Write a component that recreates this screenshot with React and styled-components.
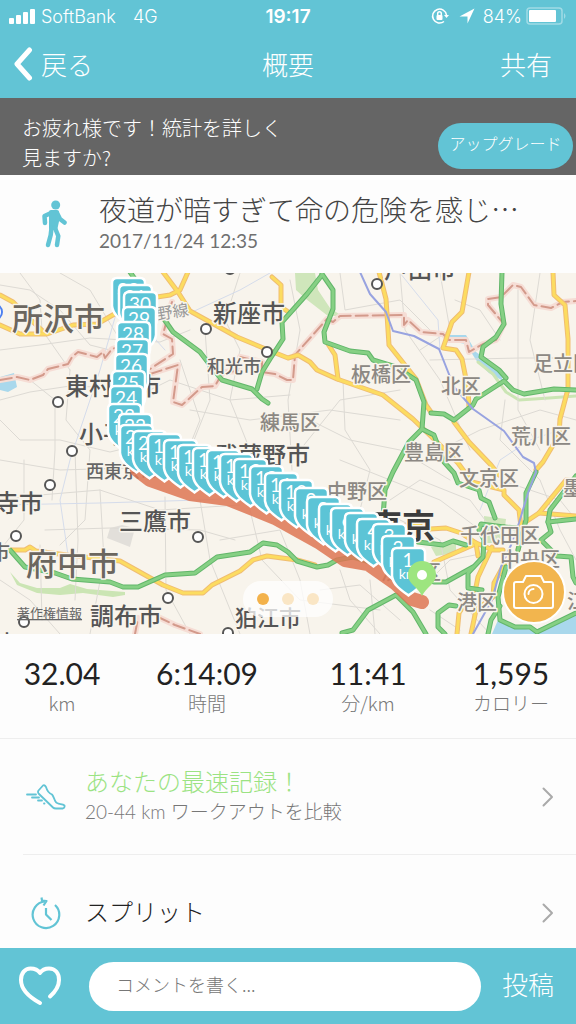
import React from 'react'
import styled, { createGlobalStyle } from 'styled-components'

const teal = '#62c4d5'
const cjk = '"Noto Sans CJK JP", sans-serif'

const GlobalStyle = createGlobalStyle`
  * { box-sizing: border-box; }
  body { margin: 0; background: #fdfdfd; }
  button, input { font: inherit; color: inherit; border: 0; padding: 0; background: none; }
  button { cursor: pointer; }
`
const Screen = styled.div`
  display: flex;
  flex-direction: column;
  height: 100vh;
  font-family: Lato, ${cjk};
  color: #222;
`
const Header = styled.header`
  flex: none;
  height: 98px;
  background: ${teal};
  color: #fff;
`
const StatusBar = styled.div`
  display: grid;
  grid-template-columns: 1fr auto 1fr;
  align-items: center;
  height: 32px;
  padding: 0 9px;
  font-family: Inter, sans-serif;
  font-size: 18px;
  font-weight: 300;
`
const StatusGroup = styled.div`
  display: flex;
  align-items: center;
  justify-content: ${p => (p.$end ? 'flex-end' : 'flex-start')};
  gap: ${p => (p.$end ? '4px' : '6px')};
  white-space: nowrap;
`
const Network = styled.span`
  margin-left: 11px;
`
const Clock = styled.span`
  font-size: 19px;
  font-weight: 600;
`
const NavBar = styled.nav`
  display: grid;
  grid-template-columns: 1fr auto 1fr;
  align-items: center;
  height: 62px;
  padding: 0 13px;
  font-family: ${cjk};
  font-size: 26px;
  font-weight: 300;
`
const Back = styled.button`
  display: flex;
  align-items: center;
  gap: 8px;
  justify-self: start;
`
const Title = styled.h1`
  margin: 0;
  font-size: 26px;
  font-weight: 300;
`
const Share = styled.button`
  justify-self: end;
  margin-right: 11px;
`
const Content = styled.main`
  flex: 1;
  min-height: 0;
  overflow-y: auto;
  scrollbar-width: none;
`
const Promo = styled.section`
  display: flex;
  justify-content: space-between;
  align-items: flex-start;
  height: 77px;
  padding: 15px 3px 0 22px;
  background: #656565;
  color: #fff;
  font-family: ${cjk};
  font-weight: 300;
`
const PromoText = styled.p`
  width: 270px;
  margin: 0;
  font-size: 20px;
  line-height: 30px;
`
const Upgrade = styled.button`
  width: 135px;
  height: 46px;
  margin-top: 10px;
  padding-bottom: 6px;
  border-radius: 23px;
  background: ${teal};
  font-size: 16px;
  white-space: nowrap;
`
const Activity = styled.section`
  display: flex;
  align-items: center;
  gap: 32px;
  height: 98px;
  padding: 0 20px 0 41px;
`
const ActivityName = styled.h2`
  margin: 0;
  font-family: ${cjk};
  font-size: 28px;
  font-weight: 300;
  line-height: 34px;
  color: #444;
`
const ActivityDate = styled.div`
  font-size: 19px;
  line-height: 30px;
  color: #707070;
`
const MapBox = styled.section`
  position: relative;
  height: 361px;
  overflow: hidden;
  background: #f8f4ec;
`
const MapSvg = styled.svg`
  display: block;
  width: 100%;
  height: 100%;
  font-family: ${cjk};
`
const Pager = styled.div`
  position: absolute;
  left: 50%;
  bottom: 17px;
  transform: translateX(-50%);
  display: flex;
  align-items: center;
  justify-content: center;
  gap: 13px;
  width: 90px;
  height: 36px;
  border-radius: 18px;
  background: rgba(255, 255, 255, 0.75);
`
const Dot = styled.button`
  width: 12px;
  height: 12px;
  border-radius: 50%;
  background: ${p => (p.$on ? '#f3b24b' : '#fae6c5')};
`
const Camera = styled.button`
  position: absolute;
  right: 10px;
  bottom: 10px;
  display: flex;
  align-items: center;
  justify-content: center;
  width: 64px;
  height: 64px;
  border: 2px solid #fff;
  border-radius: 50%;
  background: #f2b54e;
`
const Stats = styled.dl`
  display: grid;
  grid-template-columns: 124fr 166fr 156fr 130fr;
  height: 105px;
  margin: 0;
  padding-top: 22px;
  border-bottom: 1px solid #eee;
  text-align: center;
`
const Stat = styled.div`
  display: flex;
  flex-direction: column-reverse;
  justify-content: flex-end;
`
const Value = styled.dd`
  margin: 0;
  font-size: 30px;
  font-weight: 400;
  line-height: 34px;
`
const Unit = styled.dt`
  font-family: ${cjk};
  font-size: 19px;
  font-weight: 300;
  line-height: 26px;
  color: #777;
`
const Row = styled.button`
  display: flex;
  align-items: center;
  width: 100%;
  height: 116px;
  padding: 0 22px 0 23px;
  text-align: left;
`
const Divider = styled.hr`
  height: 1px;
  margin: -1px 0 0 23px;
  border: 0;
  background: #eee;
`
const RowIcon = styled.span`
  display: flex;
  justify-content: center;
  flex: none;
  width: 46px;
  margin-right: 16px;
`
const RowText = styled.span`
  flex: 1;
  display: flex;
  flex-direction: column;
  padding-bottom: 5px;
  font-family: ${cjk};
  font-weight: 300;
`
const RowTitle = styled.span`
  font-size: 24px;
  line-height: 34px;
  color: ${p => (p.$best ? '#9be383' : '#222')};
`
const RowSub = styled.span`
  font-family: Lato, ${cjk};
  font-size: 19px;
  line-height: 28px;
  color: #777;
`
const CommentBar = styled.form`
  flex: none;
  display: flex;
  align-items: center;
  height: 76px;
  padding: 0 22px 0 18px;
  background: ${teal};
  color: #fff;
  font-family: ${cjk};
  font-weight: 300;
`
const Like = styled.button`
  display: flex;
`
const CommentInput = styled.input`
  flex: 1;
  min-width: 0;
  height: 49px;
  margin: 0 21px 0 27px;
  padding: 0 27px 5px;
  border-radius: 25px;
  background: #fff;
  color: #333;
  font-size: 18px;
  &::placeholder { color: #777; opacity: 1; }
`
const Post = styled.button`
  padding-bottom: 5px;
  font-size: 26px;
`

// map geometry
const minor = [
  '0,285 30,290 60,310 90,345 110,350', '20,273 40,300 42,330 70,370', '60,273 90,290 120,340 118,380', '0,350 40,345 90,338 160,342 190,330',
  '0,400 30,392 70,386 120,388', '0,420 20,440 60,440 110,452 160,440', '30,380 55,400 55,450 52,500', '70,370 66,420 90,450 85,520 60,545',
  '0,460 60,470 130,468', '0,500 40,495 100,490 160,510 240,505', '75,450 78,540 75,600', '24,460 24,520 0,550', '45,530 110,528 200,530 235,540',
  '40,545 42,620', '0,580 30,600 60,634', '100,490 104,560 90,634', '165,497 166,590 190,634', '140,440 130,400 170,380 230,400 290,395',
  '205,330 210,400 190,450', '240,273 225,320 240,350 230,400 250,450', '290,280 300,330 288,400 292,470', '190,410 250,420 330,410 400,420',
  '180,360 200,420 180,470', '200,500 210,560 240,634', '220,540 280,530 300,580 310,634', '250,510 262,560 300,600 380,610',
  '340,273 345,310 400,300 430,330', '300,450 340,400 400,390', '343,380 345,430 370,470 360,510', '310,420 350,440 400,450 450,480',
  '400,273 405,330 440,380 470,450', '420,350 450,330 440,273', '430,360 520,358 576,358', '518,290 518,410 540,450', '455,300 480,310 500,340',
  '540,273 530,340 545,400', '505,400 500,440 540,480', '576,420 540,410 480,430 440,450', '340,460 390,480 440,500 480,530', '390,500 420,480 470,500 500,540',
  '400,520 440,540 450,590 490,634', '340,570 350,600 380,634', '420,590 450,560 500,550', '430,610 460,630', '540,480 560,530 576,560', '500,480 560,500 576,520',
  '370,580 375,634', '320,590 360,585 400,620',
]
const pale = ['165,350 120,300 100,370 70,460 60,500 68,555', '190,313 240,290 270,273', '400,273 438,320 440,350', '0,505 100,503 200,500 290,496', '480,510 500,460 530,440 560,430']
const yellow = [
  '0,295 13,302 33,322 45,333', '0,325 20,334 47,334 73,325 97,324 118,312', '157,297 170,295 180,290 188,272',
  '163,272 178,292 190,311 210,322 237,337 273,352 288,358 298,355 310,362 317,370 337,379 383,395 413,419 440,445 458,463 472,482 504,490 504,495 519,510 521,527 518,550',
  '272,277 281,285 281,307 287,311', '328,344 335,355 338,379', '379,272 386,299 389,345 416,379 426,405 431,412',
  '469,272 462,312 452,322 443,348 456,350 462,359 468,389 469,407', '553,272 554,295 565,305 568,339 568,389 560,419 559,435 543,462 536,470',
  '454,422 469,442 491,465 499,475', '10,550 25,550 30,547 36,551 67,555 120,561 163,585 183,593 203,593 212,585 240,571 253,560 267,556 297,560 315,565',
  '430,529 446,528 461,533 476,543 493,550 503,550', '434,562 473,545', '524,523 539,513 566,480 576,481', '539,513 576,516',
  '492,547 478,577 476,587 459,613 457,634', '505,563 494,583 493,597 476,610 471,634', '476,543 478,556', '420,525 390,527',
]
const green = [
  '130,272 137,282 157,309 173,332 200,352 210,365 222,380 252,389 262,399 268,403', '322,275 307,294 282,322 283,339 270,359 262,372 257,389',
  '322,274 333,290 333,309 324,332 325,342 350,351 368,353 373,360 396,367 416,380 424,402 422,429 409,442 393,472 385,490 383,517',
  '422,429 434,435 444,462 454,473 458,483 479,490 481,498 489,502 495,518', '502,272 501,304 504,324 496,337 483,347 481,357 499,370 506,378',
  '431,413 444,414 454,420 473,405 476,399 504,381 513,390 524,394 554,389 576,390',
  '10,550 25,567 55,573 72,579 110,582 123,587 138,587 165,575 195,573 217,557 250,552 263,543 277,545 288,552 297,561 317,567 328,565 337,560 353,557 370,562',
  '342,633 353,630 368,610 396,595 413,612 426,634', '418,542 443,545 453,541 466,545', '434,582 446,582 473,567',
  '504,527 481,524 479,530 484,540 483,557 468,573 468,588 482,590', '504,527 518,528', '456,606 449,605 438,613 438,627 445,634',
  '536,472 526,493 526,520 518,550', '576,476 550,510 548,522 576,519', '548,522 551,532 541,540 557,556 571,557 573,577 576,583',
  '506,567 498,597 500,620 515,627 530,627 537,632 576,613', '488,634 491,620 500,606',
]
const border = [
  '0,380 17,377 30,380 43,375 48,369 68,364 72,357 78,352 97,357 103,352 105,358 112,349 125,345', '172,302 163,334 172,339 173,354 150,369',
  '150,374 178,365 173,402 182,405 202,387 215,386 223,372 240,371', '240,357 262,362 262,372 275,374 287,380 293,380 295,355 327,319 333,322 340,316 404,315 404,325 408,320 421,332 443,334 449,340 466,340 469,352 483,344 496,340 504,324 488,305 488,299 501,297 513,285 521,287 534,305 551,308 563,302 576,301',
  '135,634 138,618', '158,617 175,625 200,634',
]
const train = ['360,272 370,294 386,312 393,331 414,336 439,349 454,387 473,409 504,431 523,457 534,463 536,472 528,493 519,523 511,545 501,567 492,600 473,634']
const stations = [[58, 402], [72, 451], [50, 485], [16, 536], [206, 329], [267, 352], [377, 284], [198, 537], [168, 598], [24, 622], [228, 633], [230, 269]]

const labels = [
  ['所沢市', 12, 330, 31, '#6b665f'], ['東村山市', 65, 395, 24, '#555'], ['小平市', 79, 443, 24, '#555'], ['新座市', 213, 322, 24, '#555'],
  ['和光市', 207, 373, 18, '#666'], ['板橋区', 351, 382, 20, '#8c8883'], ['練馬区', 260, 430, 20, '#8c8883'], ['北区', 441, 394, 20, '#8c8883'],
  ['戸田市', 384, 278, 24, '#555'], ['足立区', 533, 371, 20, '#8c8883'], ['荒川区', 511, 444, 20, '#8c8883'], ['豊島区', 404, 460, 20, '#8c8883'],
  ['文京区', 459, 486, 20, '#8c8883'], ['武蔵野市', 214, 464, 24, '#555'], ['中野区', 327, 499, 20, '#8c8883'], ['東京', 369, 538, 33, '#3c3c3c'],
  ['千代田区', 460, 543, 20, '#8c8883'], ['中央区', 500, 567, 20, '#8c8883'], ['港区', 457, 610, 20, '#8c8883'], ['墨田区', 563, 496, 20, '#8c8883'],
  ['江東区', 567, 609, 20, '#8c8883'], ['渋谷区', 381, 580, 20, '#8c8883'], ['西東京市', 86, 478, 18, '#666'], ['三鷹市', 119, 530, 24, '#555'],
  ['府中市', 26, 575, 31, '#6b665f'], ['国分寺市', -53, 512, 24, '#555'], ['立川市', -50, 560, 20, '#666'], ['調布市', 90, 625, 24, '#555'], ['狛江市', 235, 626, 22, '#555'],
  ['多摩市', -48, 651, 22, '#555'],
]

// [left, top] of every kilometre marker, the first kilometre first
const pins = [
  [391, 547], [381, 535], [372, 523], [356, 518], [344, 512], [330, 507], [318, 503], [306, 496], [294, 487], [279, 479], [264, 472],
  [249, 465], [233, 458], [219, 453], [206, 449], [192, 447], [177, 444], [163, 439], [147, 433], [132, 430], [119, 424], [118, 413],
  [107, 403], [109, 385], [111, 370], [114, 353], [115, 338], [116, 321], [122, 306], [123, 291], [118, 284], [111, 277],
]

const Lines = ({ list, ...rest }) => (
  <g fill='none' strokeLinejoin='round' strokeLinecap='round' {...rest}>
    {list.map(points => <polyline key={points} points={points} />)}
  </g>
)

const Pin = ({ km, x, y }) => (
  <g transform={`translate(${x} ${y})`}>
    <path d='M6 1H29Q34 1 34 6V29C33 38 25 43 17.500 48.500C10 43 2 38 1 29V6Q1 1 6 1Z' fill='#5cc4d6' stroke='#fff' strokeWidth='2.500' />
    <g fill='#fff' textAnchor='middle' fontFamily='Lato, sans-serif'>
      <text x='17' y='20' fontSize='19'>{km}</text>
      <text x='17' y='32' fontSize='14'>km</text>
    </g>
  </g>
)

const RouteMap = () => (
  <MapSvg viewBox='0 273 576 361' preserveAspectRatio='xMidYMid slice' role='img' aria-label='ルート'>
    <path d='M295 273H315L318 290 330 308 342 316 328 316 306 299 296 290ZM484 516 506 519 503 543 485 543ZM431 547 456 543 456 553 436 556Z' fill='#cfe6bb' />
    <path d='M10 572 20 583 37 588 60 588 70 584 87 589 125 592 125 595 113 597 83 593 60 595 37 593 17 585Z' fill='#cbe5b4' />
    <path d='M110 528 122 525 135 528 130 547 107 538Z' fill='#e2dfda' />
    <path d='M449 335 466 335 476 352 499 368 503 381 489 373 476 360 466 344 449 341ZM0 377 14 373 17 387 8 392 0 390ZM492 634 498 620 515 628 535 630 576 614V634Z' fill='#a9d8ec' />
    <Lines list={['478,362 493,374 506,392 519,400 549,398 576,396']} stroke='#cbe5b4' strokeWidth='3' />
    <Lines list={minor} stroke='#dddad4' strokeWidth='1' />
    <Lines list={pale} stroke='#d5dceb' strokeWidth='1' />
    <Lines list={border} stroke='#f6ddd5' strokeWidth='6' />
    <Lines list={border} stroke='#d39a8b' strokeWidth='2' strokeDasharray='12 5' />
    <Lines list={yellow} stroke='#f0bd72' strokeWidth='5' />
    <Lines list={yellow} stroke='#fcdc60' strokeWidth='3' />
    <Lines list={green} stroke='#62b66a' strokeWidth='5' />
    <Lines list={green} stroke='#86d084' strokeWidth='3' />
    <Lines list={train} stroke='#98a3e0' strokeWidth='2' />
    <circle cx='-6' cy='312' r='8' fill='#fff' stroke='#4c7ff0' strokeWidth='2' />
    <g fill='#fff' stroke='#555' strokeWidth='2'>
      {stations.map(([cx, cy]) => <circle key={cx} cx={cx} cy={cy} r='5' />)}
    </g>
    <g paintOrder='stroke' stroke='#f8f4ec' strokeWidth='3' strokeLinejoin='round' fontWeight='500'>
      <text transform='translate(126 325) rotate(-9)' fontSize='16' fill='#999' fontWeight='400'>武蔵野線</text>
      {labels.map(([name, x, y, size, fill]) => (
        <text key={name} x={x} y={y} fontSize={size} fill={fill} fontWeight={name === '東京' ? 700 : 500}>{name}</text>
      ))}
    </g>
    <a href='#legal'>
      <text x='17' y='618' fontSize='13' fill='#666' textDecoration='underline'>著作権情報</text>
    </a>
    <polyline
      points='120,300 138,330 124,420 137,470 150,480 190,494 228,499 275,518 320,543 345,560 368,564 395,583 412,599 422,602'
      fill='none' stroke='#de7654' strokeOpacity='0.85' strokeWidth='14' strokeLinecap='round' strokeLinejoin='round'
    />
    {pins.map(([x, y], i) => <Pin key={i} km={i + 1} x={x} y={y} />).reverse()}
    <path d='M422 596C418 587 408 584 408 575A14 14 0 0 1 436 575C436 584 426 587 422 596Z' fill='#9de57f' />
    <circle cx='422' cy='575' r='5' fill='#fff' />
  </MapSvg>
)

const Chevron = () => (
  <svg width='12' height='20' viewBox='0 0 12 20' fill='none' stroke='#aaa' strokeWidth='2' strokeLinecap='round' strokeLinejoin='round'>
    <path d='M1.500 1.500 10 10 1.500 18.500' />
  </svg>
)

const stats = [['32.04', 'km'], ['6:14:09', '時間'], ['11:41', '分/km'], ['1,595', 'カロリー']]

export default function App() {
  return (
    <Screen lang='ja'>
      <GlobalStyle />
      <Header>
        <StatusBar>
          <StatusGroup>
            <svg width='26' height='16' fill='#fff'>
              <rect y='10' width='5' height='6' rx='1' />
              <rect x='7' y='7' width='5' height='9' rx='1' />
              <rect x='14' y='4' width='5' height='12' rx='1' />
              <rect x='21' y='1' width='5' height='15' rx='1' />
            </svg>
            <span>SoftBank</span>
            <Network>4G</Network>
          </StatusGroup>
          <Clock>19:17</Clock>
          <StatusGroup $end>
            <svg width='18' height='18' viewBox='0 0 18 18' fill='none' stroke='#fff' strokeWidth='1.5'>
              <path d='M13 14.5A7 7 0 1 1 15.5 8' />
              <path d='M13 8h5l-2.5 3z' fill='#fff' stroke='none' />
              <rect x='5.5' y='8' width='6' height='5' rx='1' fill='#fff' stroke='none' />
              <path d='M6.7 8V6.500a1.800 1.800 0 0 1 3.600 0V8' />
            </svg>
            <svg width='26' height='16' viewBox='0 0 26 16' fill='#fff'>
              <path d='M21.500 .5 14.500 15.500V8.500H6.500Z' />
            </svg>
            <span>84%</span>
            <svg width='41' height='18' viewBox='0 0 41 18'>
              <rect x='1' y='1' width='35' height='16' rx='3' fill='none' stroke='#fff' strokeOpacity='0.4' strokeWidth='1.500' />
              <rect x='3' y='3' width='27' height='12' rx='1' fill='#fff' />
              <path d='M38 6q3 3 0 6z' fill='#fff' fillOpacity='0.4' />
            </svg>
          </StatusGroup>
        </StatusBar>
        <NavBar>
          <Back type='button'>
            <svg width='20' height='36' viewBox='0 0 20 36' fill='none' stroke='#fff' strokeWidth='5' strokeLinecap='round' strokeLinejoin='round'>
              <path d='M16.500 5 4 19 16.500 33' />
            </svg>
            戻る
          </Back>
          <Title>概要</Title>
          <Share type='button'>共有</Share>
        </NavBar>
      </Header>

      <Content>
        <Promo>
          <PromoText>お疲れ様です！統計を詳しく見ますか?</PromoText>
          <Upgrade type='button'>アップグレード</Upgrade>
        </Promo>

        <Activity>
          <svg width='26' height='48' viewBox='0 0 26 48' fill='none' stroke={teal} strokeLinecap='round' strokeLinejoin='round'>
            <circle cx='14.700' cy='5' r='4.500' fill={teal} stroke='none' />
            <path d='M10 13 3.500 16 4 23' strokeWidth='4.500' />
            <path d='M16 13 19 19 23.500 22.500' strokeWidth='4.500' />
            <path d='M10 12H16L16.500 19 14.500 28H10Z' fill={teal} strokeWidth='4' />
            <path d='M10.500 28 9.700 35 7 45' strokeWidth='4.500' />
            <path d='M14 28 17.300 36 16 45' strokeWidth='4.500' />
          </svg>
          <div>
            <ActivityName>夜道が暗すぎて命の危険を感じ…</ActivityName>
            <ActivityDate>2017/11/24 12:35</ActivityDate>
          </div>
        </Activity>

        <MapBox>
          <RouteMap />
          <Pager>
            <Dot type='button' aria-label='1' $on />
            <Dot type='button' aria-label='2' />
            <Dot type='button' aria-label='3' />
          </Pager>
          <Camera type='button' aria-label='写真'>
            <svg width='42' height='34' viewBox='0 0 42 34' fill='none' stroke='#fff' strokeWidth='2' strokeLinejoin='round' strokeLinecap='round'>
              <path d='M3 7H10L13 1H28L31 7H38Q40 7 40 9V31Q40 33 38 33H3Q1 33 1 31V9Q1 7 3 7Z' />
              <circle cx='20.500' cy='19' r='9' />
              <path d='M15.500 19A5 5 0 0 1 20.500 14' />
            </svg>
          </Camera>
        </MapBox>

        <Stats>
          {stats.map(([value, unit]) => (
            <Stat key={unit}>
              <Unit>{unit}</Unit>
              <Value>{value}</Value>
            </Stat>
          ))}
        </Stats>

        <Row type='button'>
          <RowIcon>
            <svg width='40' height='26' viewBox='0 0 40 26' fill='none' stroke={teal} strokeWidth='1.800' strokeLinejoin='round' strokeLinecap='round'>
              <path d='M17 1.500 12.500 6.500 C11.500 8 12 9 13 10L27 23.500Q28 24.500 30 24.500H37Q39 24 38.500 21.500C36 19.500 31 21 29.500 17.500 28 15 27.500 12 26 10.500 23.500 9.500 21 6.500 20 3Q18.500 .5 17 1.500Z' />
              <path d='M1 10.500H10M6 13.500H13M12 16.500H16M18 19.500H18.500' />
            </svg>
          </RowIcon>
          <RowText>
            <RowTitle $best>あなたの最速記録！</RowTitle>
            <RowSub>20-44 km ワークアウトを比較</RowSub>
          </RowText>
          <Chevron />
        </Row>
        <Divider />
        <Row type='button'>
          <RowIcon>
            <svg width='30' height='34' viewBox='0 0 30 34' fill='none' stroke={teal} strokeWidth='2.200'>
              <path d='M24 9A13.300 13.300 0 1 1 14 5.500' />
              <path d='M10.500 1.500 11 4.500 15.500 5 12.500 9.500' strokeLinejoin='round' />
              <path d='M15 12V18.500L20.500 24' strokeLinejoin='round' />
            </svg>
          </RowIcon>
          <RowText>
            <RowTitle>スプリット</RowTitle>
          </RowText>
          <Chevron />
        </Row>
      </Content>

      <CommentBar onSubmit={e => e.preventDefault()}>
        <Like type='button' aria-label='いいね'>
          <svg width='44' height='42' viewBox='0 0 44 42' fill='none' stroke='#fff' strokeWidth='4' strokeLinecap='round' strokeLinejoin='round'>
            <path d='M22 38C11 32 3 25 3 15 3 8 7 3.500 12.500 3.500 17 3.500 20 5 22 8 24 5 27 3.500 31 3.500 37 3.500 41 8 41 15 41 21 37 27 32 31.500' />
          </svg>
        </Like>
        <CommentInput type='text' aria-label='コメント' placeholder='コメントを書く...' />
        <Post type='submit'>投稿</Post>
      </CommentBar>
    </Screen>
  )
}
